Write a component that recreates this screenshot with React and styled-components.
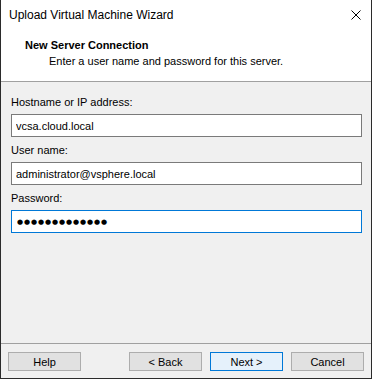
import React from 'react';
import styled, { createGlobalStyle } from 'styled-components';

const GlobalStyle = createGlobalStyle`
  html, body {
    margin: 0;
    padding: 0;
    background: #ffffff;
  }
  * {
    box-sizing: border-box;
  }
`;

const Window = styled.div`
  width: 372px;
  height: 379px;
  display: flex;
  flex-direction: column;
  background: #f0f0f0;
  border: 1px solid #2b2b2b;
  border-top: none;
  font-family: "Liberation Sans", Arial, sans-serif;
  font-size: 11px;
  color: #000;
`;

const TitleBar = styled.div`
  height: 30px;
  display: flex;
  align-items: center;
  justify-content: space-between;
  padding: 0 10px 0 8px;
  background: #fff;
`;

const Title = styled.span`
  font-size: 12px;
`;

const CloseButton = styled.div`
  width: 10px;
  height: 10px;
  display: flex;
`;

const Header = styled.div`
  height: 52px;
  background: #fff;
  border-bottom: 1px solid #a0a0a0;
  padding: 8px 0 0 24px;
  display: flex;
  flex-direction: column;
  gap: 1px;
`;

const HeaderTitle = styled.div`
  font-weight: bold;
  line-height: 15px;
`;

const HeaderText = styled.div`
  line-height: 15px;
  padding-left: 24px;
`;

const Body = styled.div`
  flex: 1;
  padding: 13px 9px 0 10px;
  display: flex;
  flex-direction: column;
`;

const Field = styled.div`
  display: flex;
  flex-direction: column;
  gap: 4px;
  margin-bottom: 6px;
`;

const Label = styled.label`
  line-height: 15px;
`;

const Input = styled.input`
  height: 23px;
  width: 100%;
  margin: 0;
  padding: 0 4px;
  border: 1px solid ${(p) => (p.$focused ? '#0078d7' : '#7a7a7a')};
  background: #fff;
  font-family: "Liberation Sans", Arial, sans-serif;
  font-size: 11px;
  color: #000;
  outline: none;
`;

const PasswordInput = styled(Input)`
  font-family: "DejaVu Sans", sans-serif;
  font-size: 7px;
  letter-spacing: 0.9px;
  padding-left: 5px;
`;

const Footer = styled.div`
  height: 35px;
  border-top: 1px solid #a0a0a0;
  display: flex;
  align-items: flex-start;
  padding: 8px 7px 0 7px;
`;

const Button = styled.button`
  width: 73px;
  height: 19px;
  margin: 0 0 0 ${(p) => p.$gap || 0}px;
  padding: 0;
  background: ${(p) => (p.$default ? '#e5f1fb' : '#e1e1e1')};
  border: 1px solid ${(p) => (p.$default ? '#0078d7' : '#adadad')};
  font-family: "Liberation Sans", Arial, sans-serif;
  font-size: 11px;
  color: #000;
`;

export default function App() {
  return (
    <>
      <GlobalStyle />
      <Window>
        <TitleBar>
          <Title>Upload Virtual Machine Wizard</Title>
          <CloseButton>
            <svg width="10" height="10" viewBox="0 0 10 10">
              <path d="M0.5 0.5 L9.5 9.5 M9.5 0.5 L0.5 9.5" stroke="#000" strokeWidth="1" />
            </svg>
          </CloseButton>
        </TitleBar>
        <Header>
          <HeaderTitle>New Server Connection</HeaderTitle>
          <HeaderText>Enter a user name and password for this server.</HeaderText>
        </Header>
        <Body>
          <Field>
            <Label>Hostname or IP address:</Label>
            <Input type="text" defaultValue="vcsa.cloud.local" readOnly />
          </Field>
          <Field>
            <Label>User name:</Label>
            <Input type="text" defaultValue="administrator@vsphere.local" readOnly />
          </Field>
          <Field>
            <Label>Password:</Label>
            <PasswordInput type="text" defaultValue="●●●●●●●●●●●●●" readOnly $focused />
          </Field>
        </Body>
        <Footer>
          <Button>Help</Button>
          <Button $gap={48}>&lt; Back</Button>
          <Button $gap={8} $default>Next &gt;</Button>
          <Button $gap={8}>Cancel</Button>
        </Footer>
      </Window>
    </>
  );
}
